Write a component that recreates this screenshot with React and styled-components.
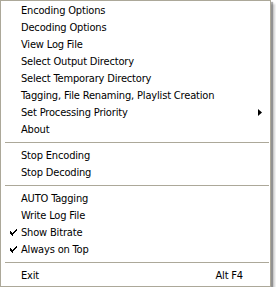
import React from 'react'
import styled, { createGlobalStyle } from 'styled-components'

const GlobalStyle = createGlobalStyle`
  html, body {
    margin: 0;
    padding: 0;
    background: #ffffff;
  }
  body {
    font-family: "DejaVu Sans Condensed", "DejaVu Sans", Tahoma, sans-serif;
    font-size: 11px;
    color: #000000;
  }
`

const menuItems = [
    { label: 'Encoding Options' },
    { label: 'Decoding Options' },
    { label: 'View Log File' },
    { label: 'Select Output Directory' },
    { label: 'Select Temporary Directory' },
    { label: 'Tagging, File Renaming, Playlist Creation' },
    { label: 'Set Processing Priority', submenu: true },
    { label: 'About' },
    { separator: true },
    { label: 'Stop Encoding' },
    { label: 'Stop Decoding' },
    { separator: true },
    { label: 'AUTO Tagging' },
    { label: 'Write Log File' },
    { label: 'Show Bitrate', checked: true },
    { label: 'Always on Top', checked: true },
    { separator: true },
    { label: 'Exit', shortcut: 'Alt F4' }
]

function CheckMark() {
    return (
        <svg width="7" height="7" viewBox="0 0 7 7">
            <path d="M0 2h1v1h1v1h1V3h1V2h1V1h1V0h1v2H6v1H5v1H4v1H3v2H2V6H1V5H0z" fill="#000"/>
        </svg>
    )
}

function SubmenuArrow() {
    return (
        <svg width="4" height="7" viewBox="0 0 4 7">
            <path d="M0 0L4 3.5L0 7z" fill="#000"/>
        </svg>
    )
}

function App() {
    return (
        <>
            <GlobalStyle/>
            <Menu>
                {menuItems.map((item, i) =>
                    item.separator ? (
                        <Separator key={i}/>
                    ) : (
                        <Item key={i}>
                            <CheckCell>{item.checked && <CheckMark/>}</CheckCell>
                            <Label>{item.label}</Label>
                            <Shortcut>{item.shortcut}</Shortcut>
                            <ArrowCell>{item.submenu && <SubmenuArrow/>}</ArrowCell>
                        </Item>
                    )
                )}
            </Menu>
        </>
    )
}

const Menu = styled.div`
  display: flex;
  flex-direction: column;
  width: 269px;
  padding: 1px 0 2px;
  background: #ffffff;
  border: 1px solid #aca899;
  box-shadow: 2px 2px 1px rgba(0, 0, 0, 0.3), 4px 4px 2px rgba(0, 0, 0, 0.18);
`

const Item = styled.div`
  display: flex;
  align-items: center;
  height: 17px;
  line-height: 17px;
  white-space: nowrap;
  letter-spacing: -0.17px;
`

const CheckCell = styled.span`
  display: flex;
  align-items: center;
  justify-content: center;
  width: 16px;
  height: 17px;
  padding-left: 4px;
`

const Label = styled.span`
  flex: 1;
`

const Shortcut = styled.span`
  padding-right: 15px;
`

const ArrowCell = styled.span`
  display: flex;
  align-items: center;
  width: 12px;
  height: 17px;
`

const Separator = styled.div`
  height: 1px;
  margin: 4px 1px 4px 4px;
  background: #aca899;
`

export default App
